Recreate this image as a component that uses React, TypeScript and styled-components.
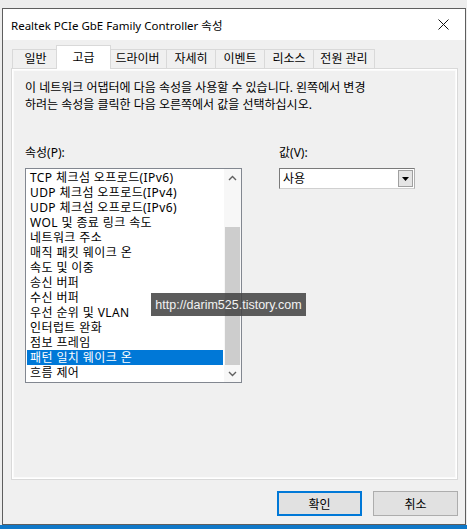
import React from 'react'
import styled, { createGlobalStyle } from 'styled-components'

const GlobalStyle = createGlobalStyle`
  html, body {
    margin: 0;
    padding: 0;
    background: #ededed;
  }
  * {
    box-sizing: border-box;
  }
`

// tab label + box width, the active one is drawn 2px wider on each side
const tabs = [
  { label: '일반', w: 47 },
  { label: '고급', w: 55 },
  { label: '드라이버', w: 59 },
  { label: '자세히', w: 50 },
  { label: '이벤트', w: 50 },
  { label: '리소스', w: 50 },
  { label: '전원 관리', w: 62 },
]

const props = [
  'TCP 체크섬 오프로드(IPv6)',
  'UDP 체크섬 오프로드(IPv4)',
  'UDP 체크섬 오프로드(IPv6)',
  'WOL 및 종료 링크 속도',
  '네트워크 주소',
  '매직 패킷 웨이크 온',
  '속도 및 이중',
  '송신 버퍼',
  '수신 버퍼',
  '우선 순위 및 VLAN',
  '인터럽트 완화',
  '점보 프레임',
  '패턴 일치 웨이크 온',
  '흐름 제어',
]

const App = () => {
  return (
    <Page>
      <GlobalStyle />
      <Window>
        <TitleBar>
          <Title>Realtek PCIe GbE Family Controller 속성</Title>
          <Close>
            <svg width="11" height="11" viewBox="0 0 11 11">
              <path d="M0.5 0.5 L10.5 10.5 M10.5 0.5 L0.5 10.5" stroke="#111" strokeWidth="1" />
            </svg>
          </Close>
        </TitleBar>
        <Body>
          <TabStrip>
            {tabs.map((t) => (
              <Tab key={t.label} $active={t.label === '고급'} $w={t.w}>{t.label}</Tab>
            ))}
          </TabStrip>
          <Panel>
            <Desc>
              이 네트워크 어댑터에 다음 속성을 사용할 수 있습니다. 왼쪽에서 변경
              <br />
              하려는 속성을 클릭한 다음 오른쪽에서 값을 선택하십시오.
            </Desc>
            <Columns>
              <LeftCol>
                <Label>속성(P):</Label>
                <ListBox>
                  <Items>
                    {props.map((p) => (
                      <Item key={p} $selected={p === '패턴 일치 웨이크 온'}>{p}</Item>
                    ))}
                  </Items>
                  <ScrollBar>
                    <Arrow>
                      <svg width="9" height="6" viewBox="0 0 9 6">
                        <path d="M1 5 L4.5 1.5 L8 5" fill="none" stroke="#606060" strokeWidth="1.4" />
                      </svg>
                    </Arrow>
                    <Track>
                      <Thumb />
                    </Track>
                    <Arrow>
                      <svg width="9" height="6" viewBox="0 0 9 6">
                        <path d="M1 1 L4.5 4.5 L8 1" fill="none" stroke="#606060" strokeWidth="1.4" />
                      </svg>
                    </Arrow>
                  </ScrollBar>
                </ListBox>
              </LeftCol>
              <RightCol>
                <Label>값(V):</Label>
                <Combo>
                  <ComboText>사용</ComboText>
                  <DropBtn>
                    <svg width="7" height="4" viewBox="0 0 7 4">
                      <path d="M0 0 L7 0 L3.5 4 Z" fill="#000" />
                    </svg>
                  </DropBtn>
                </Combo>
              </RightCol>
            </Columns>
          </Panel>
          <Buttons>
            <Button $primary>확인</Button>
            <Button>취소</Button>
          </Buttons>
        </Body>
      </Window>
      <Taskbar />
      <Watermark>http://darim525.tistory.com</Watermark>
    </Page>
  )
}

export default App

const Page = styled.div`
  position: relative;
  width: 467px;
  height: 529px;
  padding: 8px 2px 0 2px;
  display: flex;
  flex-direction: column;
  font-family: "Noto Sans", "Noto Sans CJK KR", sans-serif;
  font-size: 12px;
  color: #000;
  overflow: hidden;
`
const Window = styled.div`
  width: 464px;
  height: 517px;
  border: 1px solid #5e5e5e;
  background: #f0f0f0;
  display: flex;
  flex-direction: column;
`
const TitleBar = styled.div`
  height: 31px;
  background: #fff;
  display: flex;
  align-items: center;
  justify-content: space-between;
  padding: 0 16px 0 8px;
`
const Title = styled.div`
  font-size: 11.5px;
`
const Close = styled.div`
  display: flex;
  align-items: center;
`
const Body = styled.div`
  flex: 1;
  display: flex;
  flex-direction: column;
  padding: 6px 7px 0 8px;
`
const TabStrip = styled.div`
  display: flex;
  align-items: flex-end;
  height: 23px;
  padding-left: 2px;
  position: relative;
  z-index: 1;
`
const Tab = styled.div<{ $active?: boolean; $w: number }>`
  width: ${(p) => p.$w}px;
  height: ${(p) => (p.$active ? '24px' : '20px')};
  margin: ${(p) => (p.$active ? '0 -2px 0 -3px' : '0 0 0 -1px')};
  background: ${(p) => (p.$active ? '#fff' : '#f0f0f0')};
  border: 1px solid #d9d9d9;
  border-bottom: ${(p) => (p.$active ? 'none' : '1px solid #d9d9d9')};
  display: flex;
  align-items: center;
  justify-content: center;
  line-height: 16px;
  white-space: nowrap;
  z-index: ${(p) => (p.$active ? 2 : 1)};
`
const Panel = styled.div`
  height: 412px;
  border: 1px solid #d9d9d9;
  box-shadow: inset 0 0 0 1px #fff, inset 0 0 0 2px #fafafa;
  background: #f0f0f0;
  padding: 10px 13px 0 13px;
  margin-top: -1px;
`
const Desc = styled.div`
  line-height: 17px;
`
const Columns = styled.div`
  display: flex;
  margin-top: 32px;
`
const LeftCol = styled.div`
  display: flex;
  flex-direction: column;
  width: 217px;
`
const RightCol = styled.div`
  display: flex;
  flex-direction: column;
  margin-left: 37px;
`
const Label = styled.div`
  line-height: 16px;
  height: 23px;
`
const ListBox = styled.div`
  height: 215px;
  border: 1px solid #828790;
  background: #fff;
  display: flex;
`
const Items = styled.div`
  flex: 1;
  padding: 1px 1px 0 1px;
`
const Item = styled.div<{ $selected?: boolean }>`
  height: 15px;
  line-height: 15px;
  padding-left: 3px;
  letter-spacing: 0.4px;
  white-space: nowrap;
  overflow: hidden;
  background: ${(p) => (p.$selected ? '#0078d7' : 'transparent')};
  color: ${(p) => (p.$selected ? '#fff' : '#000')};
`
const ScrollBar = styled.div`
  width: 17px;
  display: flex;
  flex-direction: column;
  background: #f7f7f7;
`
const Arrow = styled.div`
  height: 17px;
  display: flex;
  align-items: center;
  justify-content: center;
`
const Track = styled.div`
  flex: 1;
  padding-top: 41px;
  display: flex;
  flex-direction: column;
`
const Thumb = styled.div`
  height: 138px;
  margin: 0 1px;
  background: #cdcdcd;
`
const Combo = styled.div`
  width: 136px;
  height: 21px;
  border: 1px solid #7a7a7a;
  border-right-color: #b0b0b0;
  border-bottom-color: #d0d0d0;
  background: #fff;
  display: flex;
  align-items: center;
  justify-content: space-between;
  padding: 0 1px 0 3px;
`
const ComboText = styled.div`
  line-height: 16px;
`
const DropBtn = styled.div`
  width: 15px;
  height: 17px;
  border: 1px solid #a0a0a0;
  background: #e5e5e5;
  display: flex;
  align-items: center;
  justify-content: center;
`
const Buttons = styled.div`
  display: flex;
  justify-content: flex-end;
  gap: 11px;
  margin-top: 11px;
`
const Button = styled.div<{ $primary?: boolean }>`
  width: 85px;
  height: 25px;
  background: #e1e1e1;
  border: ${(p) => (p.$primary ? '2px solid #0078d7' : '1px solid #adadad')};
  display: flex;
  align-items: center;
  justify-content: center;
`
const Taskbar = styled.div`
  height: 4px;
  margin: 0 -2px;
  background: #0f78c8;
`
const Watermark = styled.div`
  position: absolute;
  left: 151px;
  top: 293px;
  width: 155px;
  height: 23px;
  background: rgba(70, 70, 70, 0.88);
  color: #f2f2f2;
  font-family: "Liberation Sans", Arial, sans-serif;
  font-size: 12.5px;
  display: flex;
  align-items: center;
  justify-content: center;
`
